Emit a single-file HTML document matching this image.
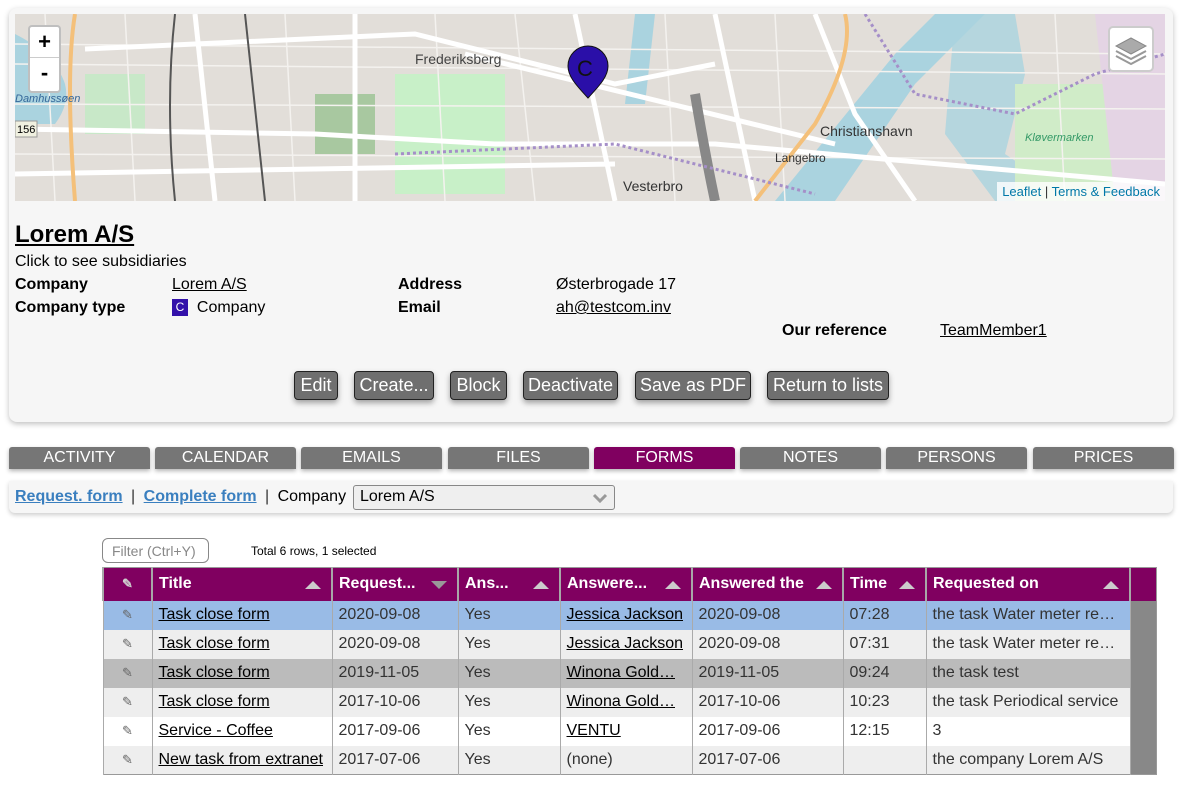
<!DOCTYPE html>
<html><head><meta charset="utf-8"><style>
*{box-sizing:border-box}
body{margin:0;width:1189px;height:793px;background:#fff;font-family:"Liberation Sans",sans-serif;font-size:16px;color:#000;position:relative;overflow:hidden}
.card{position:absolute;left:9px;top:8px;width:1164px;height:414px;background:#f6f6f6;border-radius:8px;box-shadow:0 2px 6px rgba(0,0,0,.25)}
.map{position:absolute;left:15px;top:14px;width:1150px;height:187px;overflow:hidden;background:#e2ded9}
.abs{position:absolute}
.lbl{position:absolute;font-weight:bold;font-size:16px}
.val{position:absolute;font-size:16px}
u{text-decoration:underline}
.btn{position:absolute;top:371px;height:29px;background:#6f6f6f;color:#fff;border:1px solid #222;border-radius:4px;font-size:18px;line-height:27px;text-align:center;box-shadow:0 3px 6px rgba(0,0,0,.35)}
.tab{position:absolute;top:447px;height:22px;width:141px;background:#767676;color:#fff;font-size:16px;line-height:22px;text-align:center;border-radius:3px 3px 0 0;box-shadow:0 2px 4px rgba(0,0,0,.3)}
table{position:absolute;left:102px;top:567px;border-collapse:collapse;font-size:16px;table-layout:fixed;width:1053px;border:1px solid #999}
td,th{height:29px;padding:0 6px;border-left:1px solid #aaa;white-space:nowrap;overflow:hidden;color:#333}
th{background:#800060;color:#fff;text-align:left;height:33px;position:relative;border-left:2px solid #a8a8a8}
th .ar{position:absolute;right:10px;top:13px;width:0;height:0;border-left:8px solid transparent;border-right:8px solid transparent;border-bottom:8px solid #ccc}
th .dn{border-bottom:none;border-top:8px solid #999}
td a{color:#000;text-decoration:underline}
tr.sel td{background:#99bbe6}
tr.g td{background:#eee}
tr.h td{background:#bbb}
tr.w td{background:#fff}
td.sc{background:#888!important;border-left:1px solid #aaa}
.pen{color:#666;font-size:13px;text-align:center}
</style></head><body>
<div class="card"></div>
<div class="map">
<svg width="1150" height="187" viewBox="0 0 1150 187">
<rect width="1150" height="187" fill="#e2ded9"/>
<path d="M0 20 Q40 40 50 70 Q55 90 40 110 L0 110Z" fill="#aad3df"/>
<rect x="380" y="60" width="110" height="120" fill="#c8f0c8"/>
<rect x="300" y="80" width="60" height="60" fill="#a8c8a0"/>
<rect x="70" y="60" width="60" height="60" fill="#c8e8c8"/>
<path d="M620 0 L640 0 L630 90 L610 90Z" fill="#aad3df"/>
<path d="M760 187 L880 40 L920 0 L970 0 L900 70 L820 187Z" fill="#aad3df"/>
<path d="M940 0 L1000 0 L1010 60 L990 140 L1060 187 L980 187 L930 120Z" fill="#aad3df" opacity=".8"/>
<rect x="1000" y="70" width="120" height="117" fill="#d0ecc8"/>
<path d="M1080 0 L1150 0 L1150 187 L1100 187Z" fill="#e4d4e4"/>
<g stroke="#f4f2ef" stroke-width="1.5" fill="none">
<path d="M0 30 L1150 40"/><path d="M0 50 L1150 60"/><path d="M0 90 L1150 95"/><path d="M0 140 L1150 145"/>
<path d="M30 0 L40 187"/><path d="M110 0 L120 187"/><path d="M270 0 L280 187"/><path d="M420 0 L430 187"/><path d="M500 0 L520 187"/><path d="M650 0 L660 187"/><path d="M760 0 L770 187"/><path d="M1040 0 L1050 187"/>
</g>
<g stroke="#fff" stroke-width="5" fill="none">
<path d="M0 115 L300 120 L480 130 L700 130 L1150 170"/>
<path d="M70 35 L400 20 L600 70 L700 50"/>
<path d="M180 0 L200 187"/><path d="M340 0 L340 187"/><path d="M560 0 L600 187"/>
<path d="M700 0 L740 187"/><path d="M800 0 L840 100 L900 187"/>
<path d="M450 40 L820 130"/><path d="M0 160 L600 150"/>
</g>
<path d="M60 0 Q50 60 60 187" stroke="#f4c07a" stroke-width="4" fill="none"/>
<path d="M830 0 Q840 40 800 110 L740 187" stroke="#f4c07a" stroke-width="4" fill="none"/>
<path d="M160 0 Q150 90 160 187" stroke="#555" stroke-width="2" fill="none"/>
<path d="M230 0 Q240 90 250 187" stroke="#555" stroke-width="2" fill="none"/>
<path d="M680 80 Q690 140 700 187" stroke="#888" stroke-width="10" fill="none"/>
<g stroke="#a58fc8" stroke-width="3" stroke-dasharray="3 3" fill="none">
<path d="M850 0 L900 80 L1000 100 L1080 60 L1150 40"/><path d="M380 140 L600 130 L800 180"/>
</g>
<rect x="0" y="107" width="22" height="16" fill="#f0f0e0" stroke="#999"/>
<text x="2" y="119" font-size="11" font-family="Liberation Sans">156</text>
<text x="400" y="50" font-size="14" fill="#444" font-family="Liberation Sans">Frederiksberg</text>
<text x="805" y="122" font-size="14" fill="#333" font-family="Liberation Sans">Christianshavn</text>
<text x="760" y="148" font-size="12" fill="#333" font-family="Liberation Sans">Langebro</text>
<text x="608" y="177" font-size="14" fill="#333" font-family="Liberation Sans">Vesterbro</text>
<text x="1010" y="127" font-size="11" fill="#396" font-style="italic" font-family="Liberation Sans">Kløvermarken</text>
<text x="0" y="88" font-size="11" fill="#369" font-style="italic" font-family="Liberation Sans">Damhussøen</text>
<path d="M573 84 C560 70 553 62 553 52 A20 20 0 0 1 593 52 C593 62 586 70 573 84Z" fill="#2a0fa8" stroke="#111"/>
<text x="562" y="62" font-size="22" fill="#111" font-family="Liberation Sans">C</text>
</svg>
<div class="abs" style="left:13px;top:11px;width:33px;height:68px;background:#fff;border:2px solid rgba(0,0,0,.25);border-radius:4px;font-size:22px;text-align:center;line-height:30px;font-weight:bold">+<div style="border-top:1px solid #ccc">-</div></div>
<div class="abs" style="left:1093px;top:12px;width:46px;height:46px;background:#fff;border:2px solid rgba(0,0,0,.2);border-radius:5px">
<svg width="42" height="42"><path d="M21 10 L36 18 L21 26 L6 18Z" fill="#aaa" stroke="#888"/><path d="M6 23 L21 31 L36 23" fill="none" stroke="#999" stroke-width="2"/><path d="M6 28 L21 36 L36 28" fill="none" stroke="#999" stroke-width="2"/></svg></div>
<div class="abs" style="right:0;bottom:0;background:rgba(255,255,255,.8);font-size:13px;padding:2px 5px;color:#333"><span style="color:#0078a8">Leaflet</span> | <span style="color:#0078a8">Terms &amp; Feedback</span></div>
</div>
<div class="abs" style="left:15px;top:221px;font-size:24px;font-weight:bold;text-decoration:underline">Lorem A/S</div>
<div class="val" style="left:15px;top:253px">Click to see subsidiaries</div>
<div class="lbl" style="left:15px;top:276px">Company</div>
<div class="val" style="left:172px;top:276px"><u>Lorem A/S</u></div>
<div class="lbl" style="left:15px;top:299px">Company type</div>
<div class="val" style="left:172px;top:299px"><span style="display:inline-block;width:16px;height:17px;background:#3311aa;color:#fff;font-size:12px;text-align:center;line-height:17px;vertical-align:1px">C</span>&nbsp; Company</div>
<div class="lbl" style="left:398px;top:276px">Address</div>
<div class="val" style="left:556px;top:276px">Østerbrogade 17</div>
<div class="lbl" style="left:398px;top:299px">Email</div>
<div class="val" style="left:556px;top:299px"><u>ah@testcom.inv</u></div>
<div class="lbl" style="left:782px;top:322px">Our reference</div>
<div class="val" style="left:940px;top:322px"><u>TeamMember1</u></div>
<div class="btn" style="left:294px;width:44px">Edit</div>
<div class="btn" style="left:354px;width:80px">Create...</div>
<div class="btn" style="left:450px;width:57px">Block</div>
<div class="btn" style="left:523px;width:95px">Deactivate</div>
<div class="btn" style="left:635px;width:116px">Save as PDF</div>
<div class="btn" style="left:767px;width:122px">Return to lists</div>
<div class="tab" style="left:9px">ACTIVITY</div>
<div class="tab" style="left:155px">CALENDAR</div>
<div class="tab" style="left:301px">EMAILS</div>
<div class="tab" style="left:448px">FILES</div>
<div class="tab" style="left:594px;background:#800060">FORMS</div>
<div class="tab" style="left:740px">NOTES</div>
<div class="tab" style="left:886px">PERSONS</div>
<div class="tab" style="left:1033px">PRICES</div>
<div class="abs" style="left:9px;top:481px;width:1164px;height:32px;background:#f6f6f6;border-radius:0 0 6px 6px;box-shadow:0 2px 5px rgba(0,0,0,.2)"></div>
<div class="abs" style="left:15px;top:488px;font-size:16px;line-height:18px"><b style="color:#3a7fbf;text-decoration:underline">Request. form</b> <span style="color:#333;margin:0 4px">|</span> <b style="color:#3a7fbf;text-decoration:underline">Complete form</b> <span style="color:#333;margin:0 4px">|</span> Company</div>
<div class="abs" style="left:353px;top:485px;width:262px;height:25px;border:1px solid #888;border-radius:3px;background:#efefef;padding:2px 6px;font-size:16px">Lorem A/S<svg style="position:absolute;right:6px;top:7px" width="16" height="10"><path d="M2 2 L8 8 L14 2" stroke="#999" stroke-width="3" fill="none"/></svg></div>
<div class="abs" style="left:102px;top:538px;width:107px;height:25px;border:1px solid #888;border-radius:6px;color:#888;font-size:14px;padding:4px 9px">Filter (Ctrl+Y)</div>
<div class="abs" style="left:251px;top:544px;font-size:12px">Total 6 rows, 1 selected</div>
<table>
<colgroup><col style="width:49px"><col style="width:180px"><col style="width:126px"><col style="width:102px"><col style="width:132px"><col style="width:151px"><col style="width:83px"><col style="width:204px"><col style="width:26px"></colgroup>
<tr><th class="pen" style="color:#ccc">&#9998;</th><th>Title<span class="ar"></span></th><th>Request...<span class="ar dn"></span></th><th>Ans...<span class="ar"></span></th><th>Answere...<span class="ar"></span></th><th>Answered the<span class="ar"></span></th><th>Time<span class="ar"></span></th><th>Requested on<span class="ar"></span></th><th></th></tr>
<tr class="sel"><td class="pen">&#9998;</td><td><a>Task close form</a></td><td>2020-09-08</td><td>Yes</td><td><a>Jessica Jackson</a></td><td>2020-09-08</td><td>07:28</td><td>the task Water meter re…</td><td class="sc"></td></tr>
<tr class="g"><td class="pen">&#9998;</td><td><a>Task close form</a></td><td>2020-09-08</td><td>Yes</td><td><a>Jessica Jackson</a></td><td>2020-09-08</td><td>07:31</td><td>the task Water meter re…</td><td class="sc"></td></tr>
<tr class="h"><td class="pen">&#9998;</td><td><a>Task close form</a></td><td>2019-11-05</td><td>Yes</td><td><a>Winona Gold…</a></td><td>2019-11-05</td><td>09:24</td><td>the task test</td><td class="sc"></td></tr>
<tr class="g"><td class="pen">&#9998;</td><td><a>Task close form</a></td><td>2017-10-06</td><td>Yes</td><td><a>Winona Gold…</a></td><td>2017-10-06</td><td>10:23</td><td>the task Periodical service</td><td class="sc"></td></tr>
<tr class="w"><td class="pen">&#9998;</td><td><a>Service - Coffee</a></td><td>2017-09-06</td><td>Yes</td><td><a>VENTU</a></td><td>2017-09-06</td><td>12:15</td><td>3</td><td class="sc"></td></tr>
<tr class="g"><td class="pen">&#9998;</td><td><a>New task from extranet</a></td><td>2017-07-06</td><td>Yes</td><td>(none)</td><td>2017-07-06</td><td></td><td>the company Lorem A/S</td><td class="sc"></td></tr>
</table>
</body></html>
